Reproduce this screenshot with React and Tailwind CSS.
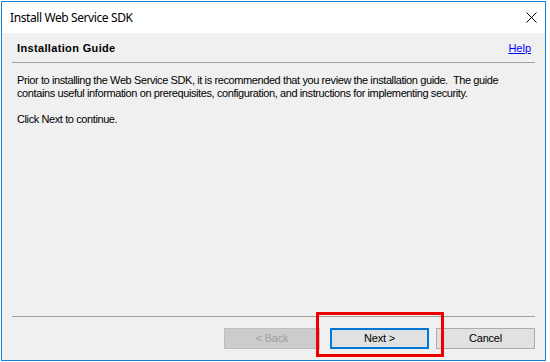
export default function App() {
  return (
    <div className="relative w-[550px] h-[362px] bg-white pl-[1px] pt-[1px]">
      <div className="w-[545px] h-[360px] border border-[#1883d7] flex flex-col">
        <div className="h-[31px] bg-white flex items-center pl-[8px] relative">
          <span className="text-[12px] text-black leading-none tracking-[-0.4px]" style={{ fontFamily: '"Noto Sans", sans-serif' }}>Install Web Service SDK</span>
          <svg className="absolute left-[524px] top-[10px]" width="11" height="11" viewBox="0 0 11 11">
            <path d="M0.5 0.5 L10.5 10.5 M10.5 0.5 L0.5 10.5" stroke="#000" strokeWidth="1" />
          </svg>
        </div>
        <div className="flex-1 bg-[#f0f0f0] flex flex-col" style={{ fontFamily: '"Liberation Sans", Arial, sans-serif' }}>
          <div className="h-[29px] flex items-start justify-between pl-[15px] pr-[14px] pt-[9px]">
            <span className="text-[11px] font-bold leading-[13px] text-black tracking-[0.35px]">Installation Guide</span>
            <a className="text-[11px] leading-[13px] text-[#0000ff] underline">Help</a>
          </div>
          <div className="ml-[10px] mr-[10px] h-px bg-[#a0a0a0]" />
          <div className="pl-[15px] pt-[11px] text-[11px] leading-[13px] text-black tracking-[-0.4px]">
            <p>Prior to installing the Web Service SDK, it is recommended that you review the installation guide.&nbsp; The guide<br />contains useful information on prerequisites, configuration, and instructions for implementing security.</p>
            <p className="mt-[13px]">Click Next to continue.</p>
          </div>
          <div className="flex-1" />
          <div className="ml-[10px] mr-[10px] h-px bg-[#a0a0a0]" />
          <div className="flex justify-end pr-[10px] pt-[11px] pb-[11px] text-[11px] tracking-[-0.2px]">
            <div className="w-[96px] h-[21px] border border-[#bfbfbf] bg-[#cccccc] text-[#a0a0a0] flex items-center justify-center">&lt; Back</div>
            <div className="ml-[10px] w-[99px] h-[21px] border-2 border-[#0078d7] bg-[#e1e1e1] text-black flex items-center justify-center">Next &gt;</div>
            <div className="ml-[7px] w-[99px] h-[21px] border border-[#adadad] bg-[#e1e1e1] text-black flex items-center justify-center">Cancel</div>
          </div>
        </div>
      </div>
      <div className="absolute left-[316px] top-[312px] w-[128px] h-[45px] border-[3px] border-[#ee0000]" />
    </div>
  );
}
